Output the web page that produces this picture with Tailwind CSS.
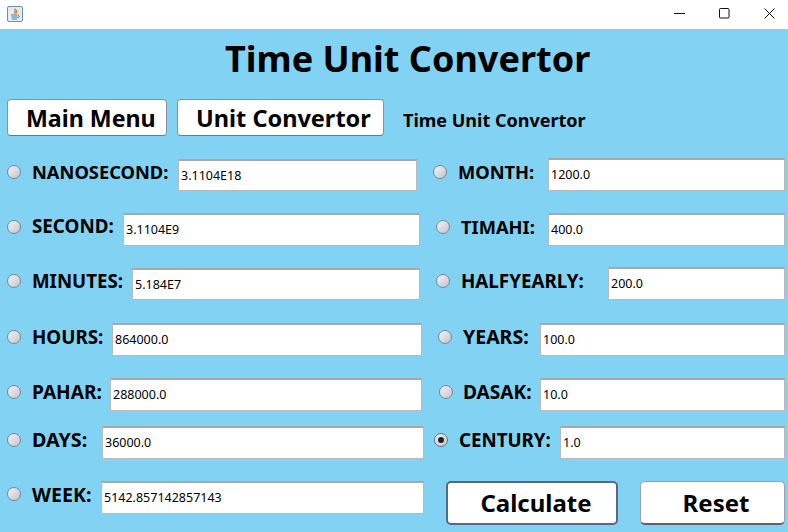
<!DOCTYPE html>
<html>
<head>
  <meta charset="UTF-8">
  <title>Time Unit Convertor</title>
  <script src="https://cdn.jsdelivr.net/npm/@tailwindcss/browser@4"></script>
</head>
<body class="w-[788px] h-[532px] overflow-hidden bg-[#82d3f3] font-['Noto_Sans',sans-serif] text-black">
  <!-- Title bar -->
  <div class="h-[29px] bg-white flex items-center">
    <svg class="ml-[7px] -mt-[2px] w-[16px] h-[16px]" viewBox="0 0 16 16">
      <rect x="0.5" y="0.5" width="15" height="15" rx="1.5" fill="#e3ebf3" stroke="#6f8db0"/>
      <path d="M8.5 2.5 C6.500 5 9.500 5.500 7.500 8 M10 4 C8.500 5.500 10 6 9.500 7.500" fill="none" stroke="#e8762b" stroke-width="1.3"/>
      <path d="M4 9h6.500M4.500 11h6M5 13h5" stroke="#4a7cb5" stroke-width="1"/>
      <path d="M11 9.500c2 0 2 2-0.500 2" fill="none" stroke="#4a7cb5"/>
    </svg>
    <div class="ml-auto -mt-[2px] flex items-center gap-[34px] mr-[13px]">
      <svg class="w-[11px] h-[11px]" viewBox="0 0 11 11"><path d="M0 5.500h11" stroke="#111" stroke-width="1"/></svg>
      <svg class="w-[11px] h-[11px]" viewBox="0 0 11 11"><rect x="0.500" y="0.500" width="9.500" height="9.500" rx="1" fill="none" stroke="#111"/></svg>
      <svg class="w-[11px] h-[11px]" viewBox="0 0 11 11"><path d="M0.500 0.500l10 10M10.500 0.500l-10 10" stroke="#111" stroke-width="1"/></svg>
    </div>
  </div>

  <h1 class="h-[60px] pl-[225px] text-[36px] leading-[60px] font-bold">Time Unit Convertor</h1>

  <!-- Nav -->
  <div class="h-[37px] mt-[10px] pl-[7px] flex items-center">
    <button class="w-[160px] h-[37px] pl-[18px] pt-[1px] bg-white border border-[#8a929c] border-b-[#6f7680] rounded-[4px] text-[23.200px] font-bold text-left">Main Menu</button>
    <button class="w-[207px] h-[37px] pl-[18px] pt-[1px] ml-[10px] bg-white border border-[#8a929c] border-b-[#6f7680] rounded-[4px] text-[23.500px] font-bold text-left">Unit Convertor</button>
    <span class="ml-[19px] mt-[5px] text-[18px] font-bold">Time Unit Convertor</span>
  </div>

  <!-- Fields -->
  <div class="mt-[22px] flex flex-col text-[18.300px] font-bold">
    <div class="h-[33px] flex items-center">
      <span class="ml-[7px] mb-[5px] w-[14px] h-[14px] rounded-full border border-[#7d8590] bg-gradient-to-br from-[#f4f4f6] to-[#c3c6d0]"></span>
      <label class="ml-[11px] mb-[5px] w-[146px]">NANOSECOND:</label>
      <input class="w-[239px] h-[32px] mt-[1px] px-[2px] pb-[1px] bg-white border border-[#b9b9b9] border-t-2 border-t-[#a8a8a8] text-[12.500px] font-normal" value="3.1104E18">
      <span class="ml-[16px] mb-[5px] w-[14px] h-[14px] rounded-full border border-[#7d8590] bg-gradient-to-br from-[#f4f4f6] to-[#c3c6d0]"></span>
      <label class="ml-[11px] mb-[5px] w-[90px]">MONTH:</label>
      <input class="w-[237px] h-[33px] px-[2px] pb-[1px] bg-white border border-[#b9b9b9] border-t-2 border-t-[#a8a8a8] text-[12.500px] font-normal" value="1200.0">
    </div>
    <div class="h-[33px] mt-[22px] flex items-center">
      <span class="ml-[7px] mb-[6px] w-[14px] h-[14px] rounded-full border border-[#7d8590] bg-gradient-to-br from-[#f4f4f6] to-[#c3c6d0]"></span>
      <label class="ml-[11px] mb-[6px] w-[91px] text-[18.800px]">SECOND:</label>
      <input class="w-[297px] h-[33px] px-[2px] pb-[1px] bg-white border border-[#b9b9b9] border-t-2 border-t-[#a8a8a8] text-[12.500px] font-normal" value="3.1104E9">
      <span class="ml-[16px] mb-[6px] w-[14px] h-[14px] rounded-full border border-[#7d8590] bg-gradient-to-br from-[#f4f4f6] to-[#c3c6d0]"></span>
      <label class="ml-[11px] mb-[6px] w-[87px]">TIMAHI:</label>
      <input class="w-[237px] h-[33px] px-[2px] pb-[1px] bg-white border border-[#b9b9b9] border-t-2 border-t-[#a8a8a8] text-[12.500px] font-normal" value="400.0">
    </div>
    <div class="h-[33px] mt-[21px] flex items-center">
      <span class="ml-[7px] mb-[5px] w-[14px] h-[14px] rounded-full border border-[#7d8590] bg-gradient-to-br from-[#f4f4f6] to-[#c3c6d0]"></span>
      <label class="ml-[11px] mb-[5px] w-[100px] text-[18.700px]">MINUTES:</label>
      <input class="w-[288px] h-[32px] mt-[1px] px-[2px] pb-[1px] bg-white border border-[#b9b9b9] border-t-2 border-t-[#a8a8a8] text-[12.500px] font-normal" value="5.184E7">
      <span class="ml-[16px] mb-[5px] w-[14px] h-[14px] rounded-full border border-[#7d8590] bg-gradient-to-br from-[#f4f4f6] to-[#c3c6d0]"></span>
      <label class="ml-[11px] mb-[5px] w-[147px] text-[18.800px]">HALFYEARLY:</label>
      <input class="w-[177px] h-[33px] px-[2px] pb-[1px] bg-white border border-[#b9b9b9] border-t-2 border-t-[#a8a8a8] text-[12.500px] font-normal" value="200.0">
    </div>
    <div class="h-[33px] mt-[23px] flex items-center">
      <span class="ml-[7px] mb-[5px] w-[14px] h-[14px] rounded-full border border-[#7d8590] bg-gradient-to-br from-[#f4f4f6] to-[#c3c6d0]"></span>
      <label class="ml-[11px] mb-[5px] w-[80px] text-[18.800px]">HOURS:</label>
      <input class="w-[310px] h-[33px] px-[2px] pb-[1px] bg-white border border-[#b9b9b9] border-t-2 border-t-[#a8a8a8] text-[12.500px] font-normal" value="864000.0">
      <span class="ml-[16px] mb-[5px] w-[14px] h-[14px] rounded-full border border-[#7d8590] bg-gradient-to-br from-[#f4f4f6] to-[#c3c6d0]"></span>
      <label class="ml-[11px] mb-[5px] w-[77px] text-[19.500px]">YEARS:</label>
      <input class="w-[245px] h-[33px] px-[2px] pb-[1px] bg-white border border-[#b9b9b9] border-t-2 border-t-[#a8a8a8] text-[12.500px] font-normal" value="100.0">
    </div>
    <div class="h-[33px] mt-[22px] flex items-center">
      <span class="ml-[7px] mb-[5px] w-[14px] h-[14px] rounded-full border border-[#7d8590] bg-gradient-to-br from-[#f4f4f6] to-[#c3c6d0]"></span>
      <label class="ml-[11px] mb-[5px] w-[78px] text-[19.100px]">PAHAR:</label>
      <input class="w-[312px] h-[33px] px-[2px] pb-[1px] bg-white border border-[#b9b9b9] border-t-2 border-t-[#a8a8a8] text-[12.500px] font-normal" value="288000.0">
      <span class="ml-[17px] mb-[5px] w-[14px] h-[14px] rounded-full border border-[#7d8590] bg-gradient-to-br from-[#f4f4f6] to-[#c3c6d0]"></span>
      <label class="ml-[10px] mb-[5px] w-[77px] text-[19.100px]">DASAK:</label>
      <input class="w-[245px] h-[33px] px-[2px] pb-[1px] bg-white border border-[#b9b9b9] border-t-2 border-t-[#a8a8a8] text-[12.500px] font-normal" value="10.0">
    </div>
    <div class="h-[33px] mt-[15px] flex items-center">
      <span class="ml-[7px] mb-[5px] w-[14px] h-[14px] rounded-full border border-[#7d8590] bg-gradient-to-br from-[#f4f4f6] to-[#c3c6d0]"></span>
      <label class="ml-[11px] mb-[5px] w-[70px] text-[19.700px]">DAYS:</label>
      <input class="w-[322px] h-[33px] px-[2px] pb-[1px] bg-white border border-[#b9b9b9] border-t-2 border-t-[#a8a8a8] text-[12.500px] font-normal" value="36000.0">
      <span class="ml-[10px] mb-[5px] w-[14px] h-[14px] rounded-full border border-[#6a7078] bg-gradient-to-br from-[#f4f4f6] to-[#c3c6d0] flex items-center justify-center"><span class="w-[6px] h-[6px] rounded-full bg-[#222]"></span></span>
      <label class="ml-[11px] mb-[5px] w-[101px] text-[18.700px]">CENTURY:</label>
      <input class="w-[225px] h-[33px] px-[2px] pb-[1px] bg-white border border-[#b9b9b9] border-t-2 border-t-[#a8a8a8] text-[12.500px] font-normal" value="1.0">
    </div>
    <div class="mt-[22px] flex items-start">
      <span class="ml-[7px] mt-[6px] w-[14px] h-[14px] rounded-full border border-[#7d8590] bg-gradient-to-br from-[#f4f4f6] to-[#c3c6d0]"></span>
      <label class="ml-[11px] w-[69px] leading-[27px] text-[19.600px]">WEEK:</label>
      <input class="w-[323px] h-[33px] px-[2px] pb-[1px] bg-white border border-[#b9b9b9] border-t-2 border-t-[#a8a8a8] text-[12.500px] font-normal" value="5142.857142857143">
      <button class="w-[172px] h-[44px] ml-[22px] pl-[8px] bg-white border-2 border-[#56688a] rounded-[5px] text-[24px] font-bold">Calculate</button>
      <button class="w-[145px] h-[44px] ml-[22px] pl-[7px] bg-white border border-[#9aa0a8] border-b-2 border-b-[#5c6068] rounded-[5px] text-[24px] font-bold">Reset</button>
    </div>
  </div>
</body>
</html>
